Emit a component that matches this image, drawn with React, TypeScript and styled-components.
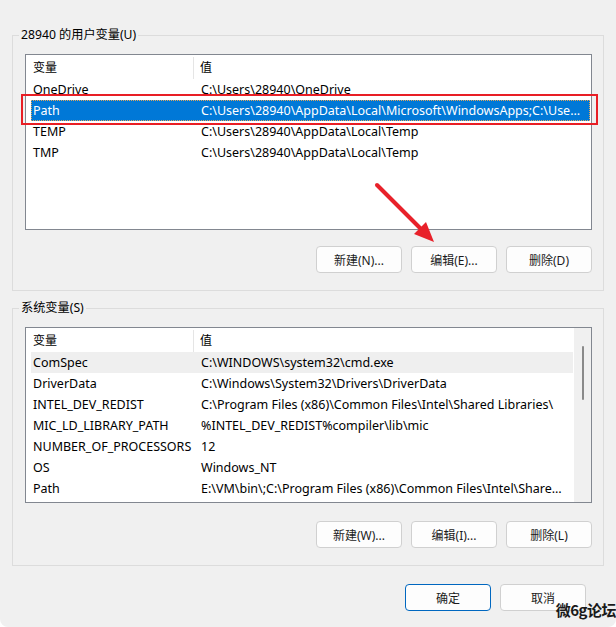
import React from "react";
import styled, { createGlobalStyle } from "styled-components";

const Global = createGlobalStyle`
  html, body { margin: 0; padding: 0; background: #ffffff; }
  body {
    font-family: "Noto Sans", "Noto Sans CJK SC", sans-serif;
    font-size: 12px;
    color: #000;
  }
`;

const Dialog = styled.div`
  position: relative;
  width: 616px;
  height: 627px;
  box-sizing: border-box;
  background: #f0f0f0;
  padding: 27px 12px 0 12px;
  display: flex;
  flex-direction: column;
  border-radius: 0 0 8px 8px;
  overflow: hidden;
`;

const Group = styled.fieldset<{ $top?: number }>`
  margin: ${(p) => p.$top ?? 0}px 0 0 0;
  border: 1px solid #dcdcdc;
  padding: 11px 11px 17px 12px;
  min-width: 0;
`;

const Legend = styled.legend`
  padding: 0 2px;
  margin-left: -6px;
  line-height: 16px;
  font-size: 12.2px;
  color: #000;
`;

const List = styled.div`
  height: 176px;
  box-sizing: border-box;
  border: 1px solid #828790;
  background: #fff;
  display: flex;
  font-size: 12.5px;
`;

const ListBody = styled.div`
  flex: 1;
  min-width: 0;
  padding: 0 1px 0 5px;
  overflow: hidden;
`;

const Header = styled.div`
  display: grid;
  grid-template-columns: 163px 1fr;
  height: 24px;
  align-items: stretch;
`;

const HeaderCell = styled.div<{ $first?: boolean }>`
  display: flex;
  align-items: center;
  padding-left: ${(p) => (p.$first ? 2 : 6)}px;
  border-right: ${(p) => (p.$first ? "1px solid #e5e5e5" : "none")};
  margin-top: 2px;
  padding-bottom: 2px;
  font-size: 12px;
`;

const Row = styled.div<{ $state?: "selected" | "hover" }>`
  display: grid;
  grid-template-columns: 168px 1fr;
  height: 21px;
  line-height: 21px;
  white-space: nowrap;
  background: ${(p) =>
    p.$state === "selected" ? "#0078d7" : p.$state === "hover" ? "#efefef" : "transparent"};
  color: ${(p) => (p.$state === "selected" ? "#fff" : "#000")};
  outline: ${(p) => (p.$state === "selected" ? "1px dotted #e3a65a" : "none")};
  outline-offset: -1px;
`;

const Cell = styled.div`
  padding: 0 6px 0 2px;
  overflow: hidden;
  text-overflow: ellipsis;
  white-space: nowrap;
`;

const ScrollTrack = styled.div`
  width: 17px;
  background: #f0f0f0;
  display: flex;
  justify-content: center;
  padding-top: 18px;
  box-sizing: border-box;
`;

const ScrollThumb = styled.div`
  width: 2px;
  height: 54px;
  background: #8a8a8a;
  border-radius: 1px;
`;

const ButtonRow = styled.div<{ $mt: number; $pr?: number }>`
  display: flex;
  justify-content: flex-end;
  gap: 9px;
  margin-top: ${(p) => p.$mt}px;
  padding-right: ${(p) => p.$pr ?? 0}px;
`;

const Button = styled.button<{ $primary?: boolean }>`
  width: 86px;
  height: 27px;
  box-sizing: border-box;
  border: 1px solid ${(p) => (p.$primary ? "#0067c0" : "#d0d0d0")};
  border-radius: 4px;
  background: #fdfdfd;
  font-family: inherit;
  font-size: 12px;
  color: #1b1b1b;
  padding: 0;
`;

const RedBox = styled.div`
  position: absolute;
  left: 21px;
  top: 94px;
  width: 577px;
  height: 31px;
  box-sizing: border-box;
  border: 2px solid #e81e25;
  pointer-events: none;
`;

const ArrowSvg = styled.svg`
  position: absolute;
  left: 370px;
  top: 178px;
  pointer-events: none;
`;

const Watermark = styled.div`
  position: absolute;
  right: 0;
  bottom: 8px;
  font-size: 15px;
  font-weight: 700;
  line-height: 18px;
  color: #1a1a1a;
  font-family: "Noto Sans CJK SC", "Noto Sans", sans-serif;
  letter-spacing: -0.5px;
`;

type Item = [string, string];

const userVars: Item[] = [
  ["OneDrive", "C:\\Users\\28940\\OneDrive"],
  ["Path", "C:\\Users\\28940\\AppData\\Local\\Microsoft\\WindowsApps;C:\\Users\\28940\\AppData\\Local\\Programs"],
  ["TEMP", "C:\\Users\\28940\\AppData\\Local\\Temp"],
  ["TMP", "C:\\Users\\28940\\AppData\\Local\\Temp"],
];

const sysVars: Item[] = [
  ["ComSpec", "C:\\WINDOWS\\system32\\cmd.exe"],
  ["DriverData", "C:\\Windows\\System32\\Drivers\\DriverData"],
  ["INTEL_DEV_REDIST", "C:\\Program Files (x86)\\Common Files\\Intel\\Shared Libraries\\"],
  ["MIC_LD_LIBRARY_PATH", "%INTEL_DEV_REDIST%compiler\\lib\\mic"],
  ["NUMBER_OF_PROCESSORS", "12"],
  ["OS", "Windows_NT"],
  ["Path", "E:\\VM\\bin\\;C:\\Program Files (x86)\\Common Files\\Intel\\Shared Libraries\\redist"],
];

function VarList({
  items,
  selected,
  hover,
  scroll,
}: {
  items: Item[];
  selected?: number;
  hover?: number;
  scroll?: boolean;
}) {
  return (
    <List>
      <ListBody>
        <Header>
          <HeaderCell $first>变量</HeaderCell>
          <HeaderCell>值</HeaderCell>
        </Header>
        {items.map(([k, v], i) => (
          <Row key={k + i} $state={i === selected ? "selected" : i === hover ? "hover" : undefined}>
            <Cell>{k}</Cell>
            <Cell>{v}</Cell>
          </Row>
        ))}
      </ListBody>
      {scroll && (
        <ScrollTrack>
          <ScrollThumb />
        </ScrollTrack>
      )}
    </List>
  );
}

export default function App() {
  return (
    <>
      <Global />
      <Dialog>
        <Group>
          <Legend>28940 的用户变量(U)</Legend>
          <VarList items={userVars} selected={1} />
          <ButtonRow $mt={16}>
            <Button>新建(N)...</Button>
            <Button>编辑(E)...</Button>
            <Button>删除(D)</Button>
          </ButtonRow>
        </Group>
        <Group $top={9}>
          <Legend>系统变量(S)</Legend>
          <VarList items={sysVars} hover={0} scroll />
          <ButtonRow $mt={18}>
            <Button>新建(W)...</Button>
            <Button>编辑(I)...</Button>
            <Button>删除(L)</Button>
          </ButtonRow>
        </Group>
        <ButtonRow $mt={18} $pr={18}>
          <Button $primary>确定</Button>
          <Button>取消</Button>
        </ButtonRow>
        <RedBox />
        <ArrowSvg width="72" height="72" viewBox="0 0 72 72">
          <line x1="7" y1="7" x2="50" y2="50" stroke="#e8212a" strokeWidth="4" strokeLinecap="round" />
          <polygon points="64,64 56,44 44,56" fill="#e8212a" />
        </ArrowSvg>
        <Watermark>微6g论坛</Watermark>
      </Dialog>
    </>
  );
}
